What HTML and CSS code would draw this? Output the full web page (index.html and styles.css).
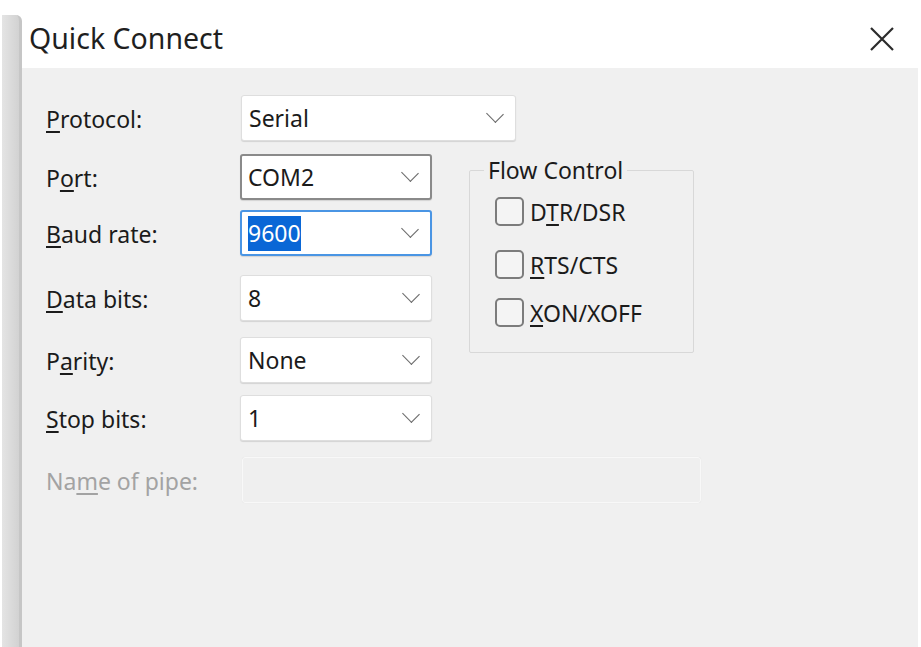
FILE: index.html
```html
<!DOCTYPE html>
<html lang="en">
<head>
    <meta charset="UTF-8">
    <title>Quick Connect</title>
    <link rel="stylesheet" href="styles.css">
</head>
<body>
    <div class="side-strip"></div>
    <div class="dialog">
        <div class="title-bar">
            <span class="title">Quick Connect</span>
            <svg class="close" width="24" height="24" viewBox="0 0 24 24">
                <path d="M1 1 L23 23 M23 1 L1 23" stroke="#2b2b2b" stroke-width="2.2" fill="none"/>
            </svg>
        </div>
        <div class="dialog-body">
            <div class="form">
                <label class="lbl"><u>P</u>rotocol:</label>
                <div class="combo wide"><span class="val">Serial</span><span class="chev"></span></div>

                <label class="lbl">P<u>o</u>rt:</label>
                <div class="combo dark"><span class="val">COM2</span><span class="chev"></span></div>

                <fieldset class="flow">
                    <legend>Flow Control</legend>
                    <div class="check"><span class="box"></span><span>D<u>T</u>R/DSR</span></div>
                    <div class="check"><span class="box"></span><span><u>R</u>TS/CTS</span></div>
                    <div class="check"><span class="box"></span><span><u>X</u>ON/XOFF</span></div>
                </fieldset>

                <label class="lbl"><u>B</u>aud rate:</label>
                <div class="combo focus"><span class="val"><span class="sel">9600</span></span><span class="chev"></span></div>

                <label class="lbl"><u>D</u>ata bits:</label>
                <div class="combo"><span class="val">8</span><span class="chev"></span></div>

                <label class="lbl">P<u>a</u>rity:</label>
                <div class="combo"><span class="val">None</span><span class="chev"></span></div>

                <label class="lbl"><u>S</u>top bits:</label>
                <div class="combo"><span class="val">1</span><span class="chev"></span></div>

                <label class="lbl disabled">Na<u>m</u>e of pipe:</label>
                <div class="pipe"></div>
            </div>
        </div>
    </div>
</body>
</html>
```

FILE: styles.css
```css
html, body {
    margin: 0;
    height: 100%;
}
body {
    display: flex;
    background: #fff;
    padding: 0 3px 0 2px;
    box-sizing: border-box;
    font-family: 'Noto Sans', 'Open Sans', sans-serif;
    color: #1b1b1b;
    overflow: hidden;
}
.side-strip {
    width: 17px;
    margin-top: 15px;
    background: linear-gradient(90deg, #e4e4e4 0%, #d2d2d2 100%);
    border-right: 3px solid #c6c6c6;
    border-top-right-radius: 6px;
}
.dialog {
    flex: 1;
    display: flex;
    flex-direction: column;
    background: #f0f0f0;
}
.title-bar {
    height: 68px;
    background: #fff;
    display: flex;
    align-items: center;
    justify-content: space-between;
    padding: 0 24px 0 7px;
}
.title {
    font-size: 28.5px;
    color: #1f1f1f;
    margin-top: 7px;
}
.close {
    margin-top: 10px;
}
.dialog-body {
    flex: 1;
    padding: 27px 0 0 24px;
}
.form {
    display: grid;
    grid-template-columns: 194px 192px 1fr;
    grid-template-rows: 59px 56px 65px 62px 58px 62px 46px;
}
.lbl {
    grid-column: 1;
    align-self: start;
    height: 46px;
    display: flex;
    align-items: center;
    font-size: 23px;
    color: #1b1b1b;
    padding-top: 2px;
    box-sizing: border-box;
}
.lbl u {
    text-underline-offset: 3px;
}
.lbl.disabled {
    color: #a3a3a3;
}
.combo {
    grid-column: 2;
    align-self: start;
    height: 46px;
    box-sizing: border-box;
    background: #fff;
    border: 1px solid #dedede;
    border-radius: 3px;
    box-shadow: 0 1px 1px rgba(0, 0, 0, 0.12);
    display: flex;
    align-items: center;
    justify-content: space-between;
    padding: 0 14px 0 7px;
    font-size: 23px;
}
.combo.wide {
    grid-column: 2 / 4;
    width: 275px;
    margin-left: 1px;
}
.combo.dark {
    border: 2px solid #8a8a8a;
    padding-left: 6px;
}
.combo.focus {
    border: 2px solid #4a95e4;
    padding-left: 6px;
}
.sel {
    background: #0a67d6;
    color: #fff;
    padding: 1px 0 2px;
}
.chev {
    width: 11px;
    height: 11px;
    border-right: 1.5px solid #6b6b6b;
    border-bottom: 1.5px solid #6b6b6b;
    transform: rotate(45deg) scaleX(1.1);
    margin-top: -8px;
}
.pipe {
    grid-column: 2 / 4;
    align-self: start;
    width: 459px;
    height: 46px;
    box-sizing: border-box;
    margin-left: 2px;
    border: 1px solid #f8f8f8;
    border-radius: 3px;
    background: #efefef;
    box-shadow: 0 0 1px rgba(0, 0, 0, 0.08);
}
.flow {
    grid-column: 3;
    grid-row: 2 / 6;
    align-self: start;
    justify-self: start;
    width: 225px;
    height: 199px;
    box-sizing: border-box;
    margin: 0 0 0 37px;
    padding: 11px 0 0 25px;
    border: 1px solid #d8d8d8;
    border-radius: 2px;
}
.flow legend {
    font-size: 23px;
    padding: 0 4px;
    margin-left: -11px;
    color: #1b1b1b;
}
.check {
    display: flex;
    align-items: center;
    gap: 6px;
    font-size: 23px;
    height: 29px;
    margin-bottom: 24px;
}
.check:nth-of-type(2) {
    margin-bottom: 19px;
}
.check u {
    text-underline-offset: 3px;
}
.box {
    width: 29px;
    height: 29px;
    box-sizing: border-box;
    border: 2px solid #7c7c7c;
    border-radius: 5px;
    background: #f4f4f4;
}
```
